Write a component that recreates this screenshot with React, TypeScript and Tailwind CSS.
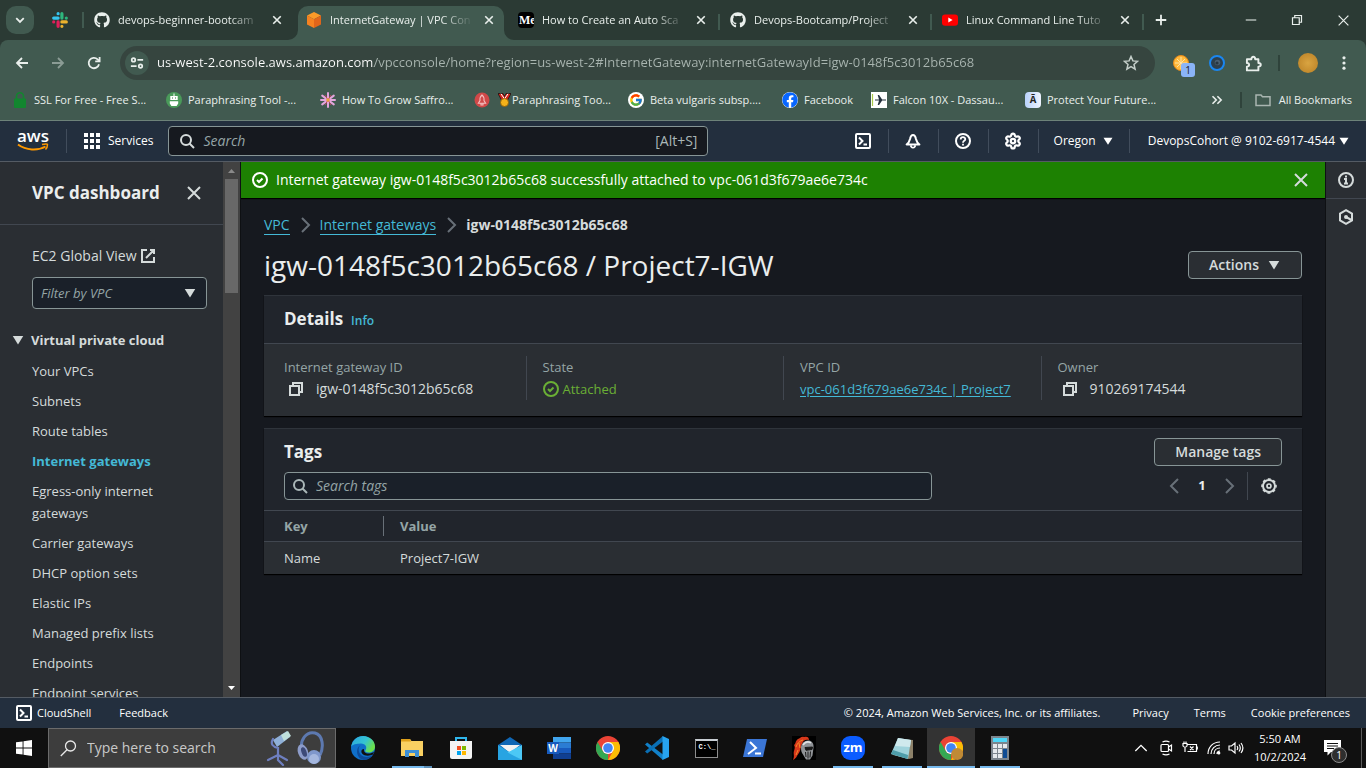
import React from "react";
import { FaGithub, FaFacebook } from "react-icons/fa";
import { FcGoogle } from "react-icons/fc";
import { Settings } from "lucide-react";

type IconProps = { className?: string; size?: number; w?: number; children?: React.ReactNode };

function Line({ className = "", size = 16, w = 2, children }: IconProps) {
  return (
    <svg
      width={size}
      height={size}
      viewBox="0 0 16 16"
      fill="none"
      stroke="currentColor"
      strokeWidth={w}
      className={`shrink-0 ${className}`}
      aria-hidden="true"
    >
      {children}
    </svg>
  );
}

const CloseIcon = ({ className, size, w }: IconProps) => (
  <Line className={className} size={size} w={w}>
    <path d="M2 2l12 12M14 2 2 14" />
  </Line>
);
const CheckCircle = ({ className }: IconProps) => (
  <Line className={className}>
    <circle cx="8" cy="8" r="7" />
    <path d="m5 8 2 2 3.5-3.5" />
  </Line>
);
const SearchIcon = ({ className }: IconProps) => (
  <Line className={className}>
    <circle cx="7" cy="7" r="5" />
    <path d="m15 15-4.5-4.5" />
  </Line>
);
const CopyIcon = ({ className }: IconProps) => (
  <Line className={className}>
    <path d="M2 5h9v9H2z" />
    <path d="M5 5V2h9v9h-3" />
  </Line>
);
const Chevron = ({ className, left }: { className?: string; left?: boolean }) => (
  <Line className={className}>
    <path d={left ? "m11 1-7 7 7 7" : "m5 1 7 7-7 7"} />
  </Line>
);
const Caret = ({ className, size = 14 }: IconProps) => (
  <svg width={size} height={size} viewBox="0 0 16 16" fill="currentColor" className={`shrink-0 ${className ?? ""}`} aria-hidden="true">
    <path d="M2 3.5h12L8 13z" />
  </svg>
);
const ShellIcon = () => (
  <Line>
    <rect x="1" y="1" width="14" height="14" rx="1" />
    <path d="m4 4.5 3.5 3.5L4 11.5M8.5 11.5H12" />
  </Line>
);
const GearSmall = () => (
  <Line>
    <circle cx="8" cy="8" r="6" />
    <circle cx="8" cy="8" r="7" strokeWidth="1.6" strokeDasharray="2.9 2.6" strokeDashoffset="1.4" />
    <circle cx="8" cy="8" r="2" strokeWidth="1.7" />
  </Line>
);

/* ---------- Browser ---------- */

const SlackLogo = () => (
  <svg width="16" height="16" viewBox="0 0 16 16" aria-hidden="true">
    <g fill="none" strokeWidth="3.2" strokeLinecap="round">
      <path d="M6.1 1.7v0M1.7 6.1h4.4" stroke="#36c5f0" />
      <path d="M9.9 1.7v4.4M14.3 6.1v0" stroke="#2eb67d" />
      <path d="M9.9 14.3v0M9.9 9.9h4.4" stroke="#ecb22e" />
      <path d="M6.1 9.9v4.4M1.7 9.9v0" stroke="#e01e5a" />
    </g>
  </svg>
);
const CubeLogo = () => (
  <svg width="16" height="16" viewBox="0 0 16 16" aria-hidden="true">
    <path d="M8 0 15 3.6 8 7.2 1 3.6z" fill="#fa9a28" />
    <path d="M1 3.6 8 7.2V16L1 12.4z" fill="#f58220" />
    <path d="M15 3.6 8 7.2V16l7-3.6z" fill="#e0651a" />
  </svg>
);
const MediumLogo = () => (
  <span className="flex size-4 items-center overflow-hidden rounded-sm bg-black pl-px font-['Liberation_Serif',serif] text-[12px] leading-4 font-bold text-white">
    Me
  </span>
);
const YoutubeLogo = () => (
  <svg width="16" height="16" viewBox="0 0 16 16" aria-hidden="true">
    <rect y="2.4" width="16" height="11.4" rx="3" fill="#f00" />
    <path d="M6.3 5.6v4.8L10.6 8z" fill="#fff" />
  </svg>
);

const tabs = [
  { title: "devops-beginner-bootcam", icon: <FaGithub size={16} />, active: false, sep: false },
  { title: "InternetGateway | VPC Con", icon: <CubeLogo />, active: true, sep: false },
  { title: "How to Create an Auto Sca", icon: <MediumLogo />, active: false, sep: true },
  { title: "Devops-Bootcamp/Project", icon: <FaGithub size={16} />, active: false, sep: true },
  { title: "Linux Command Line Tuto", icon: <YoutubeLogo />, active: false, sep: true },
];

function TabStrip() {
  return (
    <div className="flex h-10 items-center bg-[#2b3a34] text-[#e9efec]">
      <button aria-label="Search tabs" className="ml-1.5 flex size-7 items-center justify-center rounded-[10px] bg-[#415a50]">
        <Line size={12} w={2.4}>
          <path d="m3 5.5 5 5 5-5" />
        </Line>
      </button>
      <button aria-label="Slack" className="ml-[18px] flex">
        <SlackLogo />
      </button>
      <span className="ml-3.5 h-4 w-0.5 bg-[#415a50]" />
      <div className="ml-0.5 flex h-full min-w-0 items-end">
        {tabs.map((t) => (
          <div
            key={t.title}
            className={
              "relative flex h-[34px] w-[212px] items-center pb-1.5 " +
              (t.active
                ? "before:absolute before:inset-y-0 before:right-1.5 before:left-0 before:rounded-t-[10px] before:bg-[#415a50]"
                : "")
            }
          >
            {t.active && (
              <>
                <svg className="absolute bottom-0 -left-2.5" width="10" height="10" aria-hidden="true">
                  <path d="M10 0v10H0A10 10 0 0 0 10 0" fill="#415a50" />
                </svg>
                <svg className="absolute right-[-4px] bottom-0" width="10" height="10" aria-hidden="true">
                  <path d="M0 0v10h10A10 10 0 0 1 0 0" fill="#415a50" />
                </svg>
              </>
            )}
            <button className="relative flex min-w-0 flex-1 items-center gap-2 pl-2 text-[11px] leading-4">
              <span className="flex shrink-0">{t.icon}</span>
              <span className="min-w-0 flex-1 overflow-hidden text-left whitespace-nowrap [mask-image:linear-gradient(to_right,black_78%,transparent)]">
                {t.title}
              </span>
            </button>
            <button aria-label={`Close ${t.title}`} className="relative mr-[13px] ml-2 flex size-4 items-center justify-center">
              <CloseIcon size={10} w={2.6} />
            </button>
            {t.sep && <span className="absolute top-2 right-0.5 h-4 w-0.5 bg-[#415a50]" />}
          </div>
        ))}
      </div>
      <button aria-label="New tab" className="ml-[7px] flex size-4 items-center justify-center">
        <Line size={12} w={2.4}>
          <path d="M8 1v14M1 8h14" />
        </Line>
      </button>
      <div className="ml-auto flex">
        <button aria-label="Minimize" className="flex w-[46px] justify-center">
          <Line size={12} w={1.4}>
            <path d="M1 8h14" />
          </Line>
        </button>
        <button aria-label="Restore" className="flex w-[46px] justify-center">
          <Line size={12} w={1.6}>
            <path d="M2 5h9v9H2zM5 5V2h9v9h-3" />
          </Line>
        </button>
        <button aria-label="Close window" className="flex w-[46px] justify-center">
          <CloseIcon size={13} w={1.5} />
        </button>
      </div>
    </div>
  );
}

function Toolbar() {
  return (
    <div className="flex h-[46px] items-center rounded-t-[8px] bg-[#415a50] px-3.5 text-[#e9efec]">
      <button aria-label="Back" className="mr-5 flex">
        <Line w={1.8}>
          <path d="M14 8H3M8 3 3 8l5 5" />
        </Line>
      </button>
      <button aria-label="Forward" className="mr-5 flex text-[#8b9c95]">
        <Line w={1.8}>
          <path d="M2 8h11M8 3l5 5-5 5" />
        </Line>
      </button>
      <button aria-label="Reload" className="mr-[18px] flex">
        <Line w={1.8}>
          <path d="M13 9.2A5.2 5.2 0 1 1 11.6 4.3l1.8 1.7" />
          <path d="M13.6 2v4.4H9.2" />
        </Line>
      </button>
      <div className="flex h-[34px] min-w-0 flex-1 items-center rounded-full bg-[#36453f] pr-4 pl-[5px]">
        <button aria-label="Site information" className="flex size-6 items-center justify-center rounded-full bg-[#415a50]">
          <Line size={14} w={2}>
            <circle cx="4" cy="4.5" r="2" />
            <path d="M8.5 4.5H15M1 11.5h6.5" />
            <circle cx="12" cy="11.5" r="2" />
          </Line>
        </button>
        <input
          aria-label="Address"
          defaultValue="us-west-2.console.aws.amazon.com/vpcconsole/home?region=us-west-2#InternetGateway:internetGatewayId=igw-0148f5c3012b65c68"
          className="ml-2 min-w-0 flex-1 bg-[linear-gradient(to_right,#ffffff_217px,#a9b5b0_217px)] bg-clip-text text-[13px] text-transparent outline-none"
        />
        <button aria-label="Bookmark this page" className="flex text-[#c5cfca]">
          <Line w={1.5}>
            <path d="m8 1.5 1.9 4.4 4.7.4-3.6 3.1 1.1 4.7L8 11.6l-4.1 2.5L5 9.4 1.4 6.3l4.7-.4z" />
          </Line>
        </button>
      </div>
      <div className="ml-[18px] flex items-center">
        <button aria-label="Extension with 1 notice" className="relative flex">
          <svg width="16" height="16" viewBox="0 0 16 16" aria-hidden="true">
            <circle cx="8" cy="8" r="7.500" fill="#ffb93c" stroke="#e88a1a" />
            <path d="M8 2v12M2 8h12M4 4l8 8M12 4l-8 8" stroke="#ffe3a3" />
          </svg>
          <span className="absolute top-2 left-2 flex h-3.5 w-3.5 items-center justify-center rounded-[3px] bg-[#8ab4f8] text-[10px] leading-none text-[#202124]">1</span>
        </button>
        <button aria-label="Extension" className="ml-5 flex">
          <svg width="16" height="16" viewBox="0 0 16 16" aria-hidden="true">
            <circle cx="8" cy="8" r="7" fill="#2d3f4d" stroke="#1a86f0" strokeWidth="2" />
            <circle cx="8.500" cy="7.500" r="2.800" fill="#4a5f70" />
            <circle cx="8" cy="8" r="1.600" fill="#263541" />
          </svg>
        </button>
        <button aria-label="Extensions" className="ml-5 flex">
          <Line size={17} w={1.8}>
            <path d="M1.800 4H6c0-3.200 3.600-3.200 3.600 0h3v3.500c3 0 3 3.400 0 3.400v3.600H1.800v-3.600c2.800 0 2.800-3.400 0-3.400z" strokeLinejoin="round" />
          </Line>
        </button>
        <span className="ml-4 h-4 w-0.5 bg-[#2f433b]" />
        <button aria-label="Profile" className="ml-[18px] size-5 rounded-full bg-[radial-gradient(#d9a441,#b97f24)]" />
        <button aria-label="Menu" className="ml-[18px] flex">
          <svg width="16" height="16" viewBox="0 0 16 16" fill="currentColor" aria-hidden="true">
            <circle cx="8" cy="2.8" r="1.6" />
            <circle cx="8" cy="8" r="1.6" />
            <circle cx="8" cy="13.2" r="1.6" />
          </svg>
        </button>
      </div>
    </div>
  );
}

const LockMark = () => (
  <svg width="16" height="16" viewBox="0 0 16 16" aria-hidden="true">
    <rect x="2" y="6.5" width="12" height="9.5" rx="1" fill="#12862f" />
    <path d="M4.5 7V4.3a3.5 3.5 0 0 1 7 0V7" fill="none" stroke="#12862f" strokeWidth="1.6" />
  </svg>
);
const RobotMark = () => (
  <svg width="16" height="16" viewBox="0 0 16 16" aria-hidden="true">
    <circle cx="8" cy="8" r="8" fill="#4a9a5a" />
    <path d="M7.5 1.5h1V4h3.2v4H4.3V4h3.2zM3.8 9.3h8.4v2.2L10.6 14H5.4l-1.6-2.5z" fill="#fff" />
    <path d="M6 6h1M9 6h1" stroke="#2e7a40" strokeWidth="1.2" />
  </svg>
);
const FlowerMark = () => (
  <svg width="16" height="16" viewBox="0 0 16 16" aria-hidden="true">
    <path d="M8 1v14M2.2 3.6l11.6 8.8M2.2 12.4l11.6-8.8M1 8h14" stroke="#e3a5dc" strokeWidth="2" strokeLinecap="round" />
    <path d="M5 3l6 10M11 3 5 13" stroke="#b8475c" strokeWidth="1" />
    <circle cx="8" cy="8" r="1.8" fill="#e9a13b" />
  </svg>
);
const RocketMark = () => (
  <svg width="16" height="16" viewBox="0 0 16 16" aria-hidden="true">
    <circle cx="8" cy="8" r="7.5" fill="#d04848" />
    <path d="M8 3c2 1.6 2.2 3.6 2 5.6l1.6 2.6H4.4L6 8.6C5.8 6.6 6 4.600 8 3zM7 11v2h2v-2" fill="none" stroke="#f3c0c0" strokeWidth="1.1" />
  </svg>
);
const MedalMark = () => (
  <svg width="13" height="14" viewBox="0 0 13 14" aria-hidden="true">
    <path d="M0 .5h5l1.500 3 1.500-3h5L9 8H4z" fill="#d8261c" stroke="#1c1210" strokeWidth=".8" />
    <path d="M3 .8 6.500 6 10 .8" fill="none" stroke="#fff" strokeWidth="1" />
    <circle cx="6.500" cy="9.500" r="4" fill="#f5b21a" stroke="#8a5a08" strokeWidth=".8" />
  </svg>
);
const PlaneMark = () => (
  <svg width="16" height="16" viewBox="0 0 16 16" aria-hidden="true">
    <rect width="16" height="16" fill="#fff" />
    <path d="M1.500 2v12" stroke="#a9c94a" strokeWidth="1.200" />
    <path d="M4 7.400h4L6.700 3h1.400l3 4.400H15v1.200h-3.900l-3 4.400H6.700L8 8.600H4z" fill="#24303c" />
  </svg>
);
const BarMark = () => (
  <span className="flex size-4 items-center justify-center rounded-sm bg-[linear-gradient(to_right,#b9d2fb,#eef4ff)] font-['Liberation_Mono',monospace] text-[11px] leading-none font-bold text-[#222]">Ā</span>
);

function Bookmarks() {
  const link = "flex items-center gap-1.5 whitespace-nowrap";
  return (
    <nav aria-label="Bookmarks" className="flex h-[34px] items-center bg-[#415a50] pr-3.5 pb-1.5 pl-3 text-[11px] text-[#e9efec]">
      <a href="#" className={`${link} w-[154px]`}><LockMark />SSL For Free - Free S...</a>
      <a href="#" className={`${link} w-[154px]`}><RobotMark />Paraphrasing Tool -...</a>
      <a href="#" className={`${link} w-[154px]`}><FlowerMark />How To Grow Saffro...</a>
      <a href="#" className={`${link} w-[154px]`}><RocketMark /><span className="flex items-center gap-px pl-0.5"><MedalMark />Paraphrasing Too...</span></a>
      <a href="#" className={`${link} w-[154px]`}><FcGoogle size={16} className="rounded-full bg-white p-px" />Beta vulgaris subsp....</a>
      <a href="#" className={`${link} w-[89px]`}><FaFacebook size={16} className="rounded-full bg-white text-[#0866ff]" />Facebook</a>
      <a href="#" className={`${link} w-[154px]`}><PlaneMark />Falcon 10X - Dassau...</a>
      <a href="#" className={link}><BarMark />Protect Your Future...</a>
      <button aria-label="More bookmarks" className="mr-[17px] ml-auto flex">
        <Line size={12} w={2.2}>
          <path d="m2 3 5 5-5 5M8.500 3l5 5-5 5" />
        </Line>
      </button>
      <span className="mr-[13px] h-4 w-0.5 bg-[#2f433b]" />
      <a href="#" className="flex items-center gap-2 whitespace-nowrap">
        <Line w={1.500} className="text-[#a9b5b0]">
          <path d="M1 3h5l1.500 1.800H15v8.700H1z" />
        </Line>
        All Bookmarks
      </a>
    </nav>
  );
}

/* ---------- AWS console ---------- */

function TopNav() {
  const cell = "flex h-6 w-[50px] items-center justify-center border-r border-[#414d5c]";
  return (
    <header className="flex h-[42px] items-center border-t border-b border-t-[#6d8279] border-b-[#545b64] bg-[#232f3e] text-xs text-white">
      <a href="#" aria-label="AWS home" className="flex h-6 w-[67px] flex-col items-center border-r border-[#414d5c]">
        <span className="h-3.5 text-[17px] leading-[13px] font-semibold">aws</span>
        <svg width="32" height="9" viewBox="0 0 32 9" fill="none" stroke="#f90" aria-hidden="true">
          <path d="M1 1.500C9 7.500 21 8 28.500 3.500" strokeWidth="2" />
          <path d="M25 1.500c3-.8 5.500-.8 5.500 0S30 5 28.500 6.500" strokeWidth="1.500" />
        </svg>
      </a>
      <button className="ml-[17px] flex items-center gap-2">
        <svg width="16" height="16" viewBox="0 0 16 16" fill="currentColor" aria-hidden="true">
          {[0, 6, 12].map((y) => [0, 6, 12].map((x) => <rect key={`${x}-${y}`} x={x} y={y} width="4" height="4" />))}
        </svg>
        Services
      </button>
      <label className="ml-[15px] flex h-[30px] w-[540px] items-center rounded-sm border border-[#879596] bg-[#16191f] px-2.5 text-[#d5dbdb]">
        <SearchIcon />
        <input aria-label="Search services" placeholder="Search" className="ml-2 min-w-0 flex-1 bg-transparent text-sm outline-none placeholder:text-[#95a5a6] placeholder:italic" />
        <span className="text-sm text-[#aab7b8]">[Alt+S]</span>
      </label>
      <div className="ml-auto flex items-center">
        <button aria-label="CloudShell" className={cell}><ShellIcon /></button>
        <button aria-label="Notifications" className={cell}>
          <Line>
            <path d="M1.600 11.500h12.800C11.800 9.500 11.500 8 11 6c-.5-2.500-1.500-4-3-4S5.500 3.500 5 6c-.5 2-.8 3.500-3.400 5.500z" strokeLinejoin="round" />
            <path d="M6 12.200v1.300q2 2.400 4 0v-1.300" strokeWidth="1.800" />
          </Line>
        </button>
        <button aria-label="Help" className={cell}>
          <Line>
            <circle cx="8" cy="8" r="7" />
            <path d="M5.700 6.500c0-3 4.600-3 4.600-.2 0 1.600-2.300 1.500-2.300 3.400M8 10.800v1.600" strokeWidth="1.800" />
          </Line>
        </button>
        <button aria-label="Settings" className={cell}><Settings size={18} strokeWidth={3} /></button>
        <button className="flex h-6 items-center gap-1.5 border-r border-[#414d5c] px-[15px]">Oregon<Caret size={12} /></button>
        <button className="flex h-6 items-center gap-[3px] pr-4 pl-[18px] whitespace-nowrap">DevopsCohort @ 9102-6917-4544<Caret size={12} /></button>
      </div>
    </header>
  );
}

const navItems = [
  "Your VPCs", "Subnets", "Route tables", "Internet gateways", "Egress-only internet gateways",
  "Carrier gateways", "DHCP option sets", "Elastic IPs", "Managed prefix lists", "Endpoints", "Endpoint services",
];

function Sidebar() {
  return (
    <aside className="flex w-60 shrink-0 overflow-hidden bg-[#2a2e33] text-[#d5dbdb]">
      <div className="min-w-0 flex-1 overflow-hidden text-[13px] leading-[22px]">
        <div className="flex h-[63px] items-center justify-between border-b border-[#414750] pr-[21px] pl-8">
          <h2 className="text-[17px] font-bold text-[#eaeded]">VPC dashboard</h2>
          <button aria-label="Close navigation" className="flex"><CloseIcon /></button>
        </div>
        <div className="pt-5 pr-4 pl-8">
          <a href="#" className="flex items-center gap-1 text-sm leading-[22px]">
            EC2 Global View
            <Line>
              <path d="M10 2h4v4M6 10l8-8M14 9v5H2V2h5" />
            </Line>
          </a>
          <div className="relative mt-2.5">
            <select aria-label="Filter by VPC" className="block h-8 w-full appearance-none rounded-sm border border-[#879596] bg-[#1a2029] px-2 text-[13px] text-[#95a5a6] italic">
              <option>Filter by VPC</option>
            </select>
            <Caret size={14} className="pointer-events-none absolute top-[9px] right-2.5" />
          </div>
        </div>
        <h3 className="mt-5 flex items-center gap-1.5 pl-[11px] font-bold">
          <Caret size={14} />
          Virtual private cloud
        </h3>
        <ul className="mt-[5px] pr-10 pl-8">
          {navItems.map((n) => (
            <li key={n} className="py-1">
              <a href="#" className={n === "Internet gateways" ? "font-bold text-[#44b9d6]" : ""}>{n}</a>
            </li>
          ))}
        </ul>
      </div>
      <div aria-hidden="true" className="flex w-[17px] shrink-0 flex-col items-center bg-[#424242]">
        <svg width="17" height="17" viewBox="0 0 17 17"><path d="M5 11h7L8.500 7z" fill="#8a8a8a" /></svg>
        <div className="h-[114px] w-[13px] bg-[#686868]" />
        <svg className="mt-auto" width="17" height="17" viewBox="0 0 17 17"><path d="M5 6h7L8.500 10z" fill="#fff" /></svg>
      </div>
    </aside>
  );
}

function Details() {
  const col = "h-11 border-l border-[#414750] pl-4 first:border-transparent first:pl-[15px]";
  return (
    <section className="mt-3 border-t border-[#2f343b] bg-[#2a2e33] shadow-[0_1px_1px_#000]">
      <div className="flex h-12 items-center gap-2 border-b border-[#414750] bg-[#21252c] px-5 pb-0.5">
        <h2 className="text-[17px] font-bold text-[#eaeded]">Details</h2>
        <a href="#" className="pt-1 text-xs font-semibold text-[#44b9d6]">Info</a>
      </div>
      <div className="grid grid-cols-4 px-1 pt-3 pb-4 text-[13px] leading-[22px] text-[#95a5a6]">
        <div className={col}>
          <div>Internet gateway ID</div>
          <div className="flex items-center text-sm leading-[22px] text-[#d5dbdb]">
            <button aria-label="Copy gateway ID" className="mr-3 ml-1 flex"><CopyIcon /></button>igw-0148f5c3012b65c68
          </div>
        </div>
        <div className={col}>
          <div>State</div>
          <div className="flex items-center gap-1 text-[#6aaf35]"><CheckCircle />Attached</div>
        </div>
        <div className={col}>
          <div>VPC ID</div>
          <a href="#" className="whitespace-nowrap text-[#44b9d6] underline underline-offset-2">vpc-061d3f679ae6e734c | Project7</a>
        </div>
        <div className={col}>
          <div>Owner</div>
          <div className="flex items-center text-sm leading-[22px] text-[#d5dbdb]">
            <button aria-label="Copy owner" className="mr-3 ml-1 flex"><CopyIcon /></button>910269174544
          </div>
        </div>
      </div>
    </section>
  );
}

const outlineBtn = "flex h-7 items-center rounded-sm border border-[#879596] bg-[#2a2e33] px-5 text-sm font-semibold text-[#d5dbdb]";

function Tags() {
  return (
    <section className="mt-3 border-t border-[#2f343b] bg-[#2a2e33] shadow-[0_1px_1px_#000]">
      <div className="bg-[#21252c] px-5 pt-[9px] pb-2.5">
        <div className="flex items-center justify-between">
          <h2 className="text-[17px] leading-7 font-bold text-[#eaeded]">Tags</h2>
          <button className={outlineBtn}>Manage tags</button>
        </div>
        <div className="mt-1.5 flex items-center">
          <label className="flex h-7 w-[648px] items-center rounded-sm border border-[#879596] bg-[#1a2029] px-[7px] text-[#aab7b8]">
            <SearchIcon />
            <input aria-label="Search tags" placeholder="Search tags" className="ml-2 min-w-0 flex-1 bg-transparent text-sm outline-none placeholder:text-[#95a5a6] placeholder:italic" />
          </label>
          <div className="ml-auto flex items-center text-[13px] text-[#687078]">
            <button aria-label="Previous page" className="flex"><Chevron left /></button>
            <button className="w-[38px] text-center font-bold text-[#eaeded]">1</button>
            <button aria-label="Next page" className="flex"><Chevron /></button>
            <span className="ml-2.5 h-7 w-px bg-[#414750]" />
            <button aria-label="Table preferences" className="mr-[5px] ml-[13px] flex text-[#d5dbdb]"><GearSmall /></button>
          </div>
        </div>
      </div>
      <table className="w-full border-collapse text-left text-[13px] leading-5">
        <thead>
          <tr className="border-y border-[#414750] bg-[#21252c] text-[#95a5a6]">
            <th className="h-[31px] w-[120px] p-0 align-middle">
              <span className="block h-5 border-r border-[#687078] pl-5">Key</span>
            </th>
            <th className="p-0 pl-4 align-middle">Value</th>
          </tr>
        </thead>
        <tbody>
          <tr className="h-8 text-[#d5dbdb]">
            <td className="pl-5">Name</td>
            <td className="pl-4">Project7-IGW</td>
          </tr>
        </tbody>
      </table>
    </section>
  );
}

function Main() {
  return (
    <main className="ml-px min-w-0 flex-1 overflow-hidden bg-[#16191f] text-[#d5dbdb]">
      <div role="status" className="flex h-9 items-center bg-[#1d8102] pr-4 pl-[11px] text-sm text-white shadow-[0_1px_1px_#000]">
        <CheckCircle />
        <span className="ml-2 flex-1">Internet gateway igw-0148f5c3012b65c68 successfully attached to vpc-061d3f679ae6e734c</span>
        <button aria-label="Dismiss" className="flex text-[#d5dbdb]"><CloseIcon /></button>
      </div>
      <div className="px-[23px]">
        <nav aria-label="Breadcrumb" className="mt-[17px] flex h-5 items-center text-sm leading-[18px]">
          <a href="#" className="border-b border-[#44b9d6] leading-[18px] text-[#44b9d6]">VPC</a>
          <Chevron className="mx-[7px] text-[#687078]" />
          <a href="#" className="border-b border-[#44b9d6] leading-[18px] text-[#44b9d6]">Internet gateways</a>
          <Chevron className="mx-[7px] text-[#687078]" />
          <span className="font-bold">igw-0148f5c3012b65c68</span>
        </nav>
        <div className="mt-3 flex h-9 items-center justify-between">
          <h1 className="text-[28px] leading-9 text-[#eaeded]">igw-0148f5c3012b65c68 / Project7-IGW</h1>
          <button className={outlineBtn}>Actions<Caret size={14} className="ml-2" /></button>
        </div>
        <Details />
        <Tags />
      </div>
    </main>
  );
}

function ToolRail() {
  return (
    <aside className="ml-px flex w-10 shrink-0 flex-col bg-[#2a2e33] text-[#d5dbdb]">
      <button aria-label="Info panel" className="flex h-[37px] items-center justify-center border-b border-[#414750]">
        <Line>
          <circle cx="8" cy="8" r="7" />
          <path d="M6 7h2v4M6 11.500h4M7 4.500h2" />
        </Line>
      </button>
      <button aria-label="Assistant panel" className="flex h-9 items-center justify-center">
        <Line>
          <path d="M8 1.200 14 4.600v6.800L8 14.800 2 11.400V4.600z" />
          <path d="m8 8 5.500 3" />
          <circle cx="8" cy="8" r="1" />
        </Line>
      </button>
    </aside>
  );
}

function Footer() {
  return (
    <footer className="flex h-[31px] shrink-0 items-center border-t border-[#545b64] bg-[#232f3e] px-4 text-[11px] whitespace-nowrap text-white">
      <button className="flex items-center gap-[5px]"><ShellIcon />CloudShell</button>
      <button className="ml-7">Feedback</button>
      <span className="ml-auto">© 2024, Amazon Web Services, Inc. or its affiliates.</span>
      <a href="#" className="ml-8">Privacy</a>
      <a href="#" className="ml-[25px]">Terms</a>
      <a href="#" className="ml-[25px]">Cookie preferences</a>
    </footer>
  );
}

/* ---------- Windows taskbar ---------- */

const ChromeLogo = ({ badge }: { badge?: boolean }) => (
  <svg width="24" height="24" viewBox="0 0 24 24" aria-hidden="true">
    <circle cx="12" cy="12" r="12" fill="#ea4335" />
    <path d="M1.600 6 6.800 15a6 6 0 0 0 5.200 3L12 24A12 12 0 0 1 1.600 6" fill="#34a853" />
    <path d="M12 6h10.400A12 12 0 0 1 12 24l5.200-9z" fill="#fbbc05" />
    <circle cx="12" cy="12" r="6" fill="#fff" />
    <circle cx="12" cy="12" r="4.800" fill="#4285f4" />
    {badge && <circle cx="18.200" cy="18" r="6" fill="#c08a35" />}
  </svg>
);

const apps: { name: string; bar?: string; active?: boolean; icon: React.ReactNode }[] = [
  {
    name: "Edge",
    icon: (
      <svg width="24" height="24" viewBox="0 0 24 24" aria-hidden="true">
        <defs>
          <linearGradient id="edge-top" x1="0" x2="1" y1="0" y2=".5">
            <stop offset="0" stopColor="#2aa5e0" />
            <stop offset=".6" stopColor="#35c4d2" />
            <stop offset="1" stopColor="#6be04a" />
          </linearGradient>
        </defs>
        <circle cx="12" cy="12" r="12" fill="#0f6fc9" />
        <path d="M.2 10.500C1.500 4 6.500 0 12 0c7 0 12 5.200 12 10.500 0 4-3 6-6.500 6-3 0-4-1.300-3-2.500 2-2.600 0-6.500-4.500-6.500-5 0-8.500 1-9.800 3z" fill="url(#edge-top)" />
        <path d="M9.500 9C7 11 7 16 10 19c3 2.600 8 2.600 12 0a12 12 0 0 1-9 5C5 23 4 12 9.500 9z" fill="#0c4a9a" />
        <path d="M13 13c-.5 2.500 1 4.500 4.500 4.500 2 0 4-.7 5.500-1.500l-1 2.500c-4 2-10 1.500-11.500-2-.5-2 .5-3.500 2.500-3.500z" fill="#101010" />
      </svg>
    ),
  },
  {
    name: "File Explorer",
    bar: "split",
    icon: (
      <svg width="22" height="19" viewBox="0 0 22 19" aria-hidden="true">
        <path d="M0 0h9l1.500 2H22v15H0z" fill="#f9d062" />
        <path d="M0 0h9l1 2.500H0z" fill="#dfa01a" />
        <path d="M4 18V11h14v7h-4v-4H8v4z" fill="#3d8fd6" />
      </svg>
    ),
  },
  {
    name: "Microsoft Store",
    icon: (
      <svg width="24" height="24" viewBox="0 0 24 24" aria-hidden="true">
        <path d="M7 6V2h10v4" fill="none" stroke="#2fb6ec" strokeWidth="2" />
        <path d="M1 5h22v16q0 2-2 2H3q-2 0-2-2z" fill="#f4f4f4" />
        <path d="M8 10h4v4H8z" fill="#f25022" />
        <path d="M13 10h4v4h-4z" fill="#7fba00" />
        <path d="M8 15h4v4H8z" fill="#00a4ef" />
        <path d="M13 15h4v4h-4z" fill="#ffb900" />
      </svg>
    ),
  },
  {
    name: "Mail",
    icon: (
      <svg width="24" height="23" viewBox="0 0 24 23" aria-hidden="true">
        <path d="M0 8 12 0l12 8v15H0z" fill="#1067b5" />
        <path d="M2 8h20l-10 8z" fill="#f2f2f2" />
        <path d="M0 8v15h24z" fill="#28a4e2" />
        <path d="M24 8v15L9.500 15.500z" fill="#4cc8f5" />
      </svg>
    ),
  },
  {
    name: "Word",
    icon: (
      <span className="relative flex">
        <svg width="24" height="22" viewBox="0 0 24 22" aria-hidden="true">
          <path d="M6 0h18v5.500H6z" fill="#41a5ee" />
          <path d="M6 5.500h18V11H6z" fill="#2b7cd3" />
          <path d="M6 11h18v5.500H6z" fill="#185abd" />
          <path d="M6 16.500h18V22H6z" fill="#103f91" />
          <path d="M0 5h12v12H0z" fill="#185abd" />
        </svg>
        <span className="absolute top-[5px] left-0 w-3 text-center text-[10px] leading-3 font-bold text-white">W</span>
      </span>
    ),
  },
  { name: "Chrome", icon: <ChromeLogo /> },
  {
    name: "Visual Studio Code",
    icon: (
      <svg width="24" height="24" viewBox="0 0 24 24" aria-hidden="true">
        <path d="m0 8.500 2.200-2L18 18.500V24z" fill="#1180c8" />
        <path d="m0 15.500 2.200 2L18 5.500V0z" fill="#0a6fb4" />
        <path d="M17.500 0 24 3v18l-6.500 3z" fill="#27a3ee" />
      </svg>
    ),
  },
  {
    name: "Command Prompt",
    icon: (
      <span className="flex h-[19px] w-[23px] flex-col border border-t-2 border-[#8d8d8d] border-t-[#c9ced3] bg-black pt-0.5 pl-0.5 font-['Liberation_Mono',monospace] text-[7px] leading-[8px] font-bold text-white">
        C:\_
      </span>
    ),
  },
  {
    name: "PowerShell",
    icon: (
      <svg width="24" height="18" viewBox="0 0 24 18" aria-hidden="true">
        <path d="M4 0h20l-4 18H0z" fill="#3b76d6" />
        <path d="m7 3 6 6-8 6M12 14.500h6" fill="none" stroke="#fff" strokeWidth="2" />
      </svg>
    ),
  },
  {
    name: "Knight",
    icon: (
      <svg width="24" height="24" viewBox="0 0 24 24" aria-hidden="true">
        <rect width="24" height="24" fill="#000" />
        <path d="M1 24c2-4 0-6 1-9s1-4 0-6c2-1 1-4 4-6 2 0 3-3 6-2 3-1 5 0 5 3-3-1-6 0-7 4-2 3-1 6-3 9-2 2-2 5-6 7z" fill="#d8381a" />
        <path d="M4 11c1-3 3-6 7-7M4 19l2-5M7 7l1 5" stroke="#f48a2a" fill="none" />
        <path d="M9 12c0-5 4-8 8-7.500 3 .5 5 3 4.500 7l-1 8-2.500 4h-4l-3-5c-1.500-2-2-4-2-6.500z" fill="#8f9296" />
        <path d="M11 9c2-3 5-4 8-2" stroke="#dfe2e5" fill="none" strokeWidth="1.500" />
        <path d="m13 11.500 7.500-.5-.5 2.500-6 .8zM16 15.500v7M18.500 15.500l-.5 6M13.500 16l.5 5" stroke="#1a1a1a" fill="#1a1a1a" />
      </svg>
    ),
  },
  {
    name: "Zoom",
    bar: "full",
    icon: <span className="flex size-6 items-center justify-center rounded-[9px] bg-[#0b5cff] pb-0.5 text-[13px] leading-none font-bold text-white">zm</span>,
  },
  {
    name: "Notepad",
    bar: "full",
    icon: (
      <svg width="23" height="23" viewBox="0 0 23 23" aria-hidden="true">
        <path d="m8 2 14 1v18l-4 1L2 18z" fill="#8c8169" />
        <path d="m7 1 13 2-3 19L0 17z" fill="#9fd3dc" />
        <path d="m7 1 13 2-1 7L4 9z" fill="#cfe9ed" />
        <path d="m2 13 15 5-.5 4L0 17z" fill="#4f9eab" />
      </svg>
    ),
  },
  { name: "Chrome profile", bar: "active", active: true, icon: <ChromeLogo badge /> },
  {
    name: "Calculator",
    bar: "full",
    icon: (
      <svg width="18" height="24" viewBox="0 0 18 24" aria-hidden="true">
        <rect width="18" height="24" fill="#7c858d" />
        <path d="M2 2h14v4H2z" fill="#4fd6f7" />
        <path d="M2 8h4v4H2zM7 8h4v4H7zM12 8h4v4h-4zM2 13h4v4H2zM7 13h4v4H7zM2 18h4v4H2zM7 18h4v4H7z" fill="#e6e9ec" />
        <path d="M12 13h4v9h-4z" fill="#0f4c94" />
      </svg>
    ),
  },
];

function Taskbar() {
  return (
    <div className="flex h-10 shrink-0 items-center bg-[#101010] text-white">
      <button aria-label="Start" className="flex h-full w-12 items-center justify-center">
        <svg width="16" height="16" viewBox="0 0 16 16" fill="#fff" aria-hidden="true">
          <path d="M0 2.300 6.600 1.400v6.100H0zM7.500 1.200 16 0v7.500H7.500zM0 8.400h6.600v6.200L0 13.700zM7.500 8.400H16V16l-8.500-1.200z" />
        </svg>
      </button>
      <label className="flex h-full w-72 shrink-0 items-center border border-[#6b6b6b] bg-[#3d3d3d] pr-2 pl-[11px]">
        <svg width="17" height="17" viewBox="0 0 17 17" fill="none" stroke="#e8e8e8" strokeWidth="1.300" aria-hidden="true">
          <circle cx="10.500" cy="6" r="5" />
          <path d="M7 9.700.8 16" />
        </svg>
        <input aria-label="Search Windows" placeholder="Type here to search" className="ml-2.5 min-w-0 flex-1 bg-transparent text-sm outline-none placeholder:text-[#c9c9c9]" />
        <svg width="62" height="36" viewBox="0 0 62 36" aria-hidden="true">
          <path d="M8 10 22 1l3 6-13 10z" fill="#8fb0d8" />
          <path d="m16 5 7-4 3 5-7 5z" fill="#bfe0dc" />
          <path d="M8 9c-3 5 0 8 5 9v8M13 25 3 30M13 25l9 5M13 25v5l5 5" fill="none" stroke="#6e7fc0" strokeWidth="2.200" strokeLinecap="round" />
          <path d="M37 22C34 9 42 1 50 3c8 2 9 14 5 22" fill="none" stroke="#5d79b0" strokeWidth="3" />
          <ellipse cx="38" cy="22" rx="5" ry="8" fill="#8d9cc9" transform="rotate(-20 38 22)" />
          <ellipse cx="39" cy="22" rx="2.500" ry="5" fill="#3d4a78" transform="rotate(-20 39 22)" />
          <ellipse cx="49" cy="27" rx="7" ry="7" fill="#7f97cb" />
          <ellipse cx="49" cy="29" rx="5" ry="5" fill="#a5b7de" />
        </svg>
      </label>
      <div className="ml-[3px] flex h-full gap-px">
        {apps.map((a) => (
          <button key={a.name} aria-label={a.name} className={"relative flex h-full w-12 items-center justify-center " + (a.active ? "bg-[#333]" : "")}>
            {a.icon}
            {a.bar === "full" && <span className="absolute inset-x-1 bottom-0 h-0.5 bg-[#76b9ed]" />}
            {a.bar === "active" && <span className="absolute inset-x-0 bottom-0 h-0.5 bg-[#76b9ed]" />}
            {a.bar === "split" && (
              <>
                <span className="absolute bottom-0 left-1 h-0.5 w-8 bg-[#76b9ed]" />
                <span className="absolute right-1 bottom-0 h-0.5 w-2 bg-[#5c8fb8]" />
              </>
            )}
          </button>
        ))}
      </div>
      <div className="ml-auto flex h-full items-center">
        <button aria-label="Hidden icons" className="flex">
          <Line size={14} w={1.500}><path d="M1.500 11.500 8 5l6.500 6.500" /></Line>
        </button>
        <button aria-label="Meet now" className="ml-2.5 flex">
          <Line w={1.200}>
            <rect x="3" y="4.500" width="7.500" height="7" rx="1" />
            <path d="m10.500 7 3-2v6l-3-2M4.500 2Q8 .2 11.500 2M4.500 14q3.500 1.800 7 0" />
          </Line>
        </button>
        <button aria-label="Battery" className="ml-2 flex">
          <Line w={1.200}>
            <path d="M5.500 4.500h9v7h-9M15.300 6.500v3M8 6.500l3.500 3.500M11.500 6.500 8 10M1 3.500h4v2.500q-2 2.500-4 0zM3 7.500V12M2 1.500v2M4 1.500v2" />
          </Line>
        </button>
        <button aria-label="Network" className="ml-2 flex">
          <Line w={1.200}>
            <path d="M2 14C2 7 7 2 14 2M5 14c0-5 4-9 9-9M8 14c0-3.500 2.500-6 6-6M11 14c0-2 1-3 3-3" />
            <circle cx="12.800" cy="13" r="1" fill="currentColor" />
          </Line>
        </button>
        <button aria-label="Volume" className="ml-1.5 flex">
          <Line w={1.200}>
            <path d="M1 6h2.500L7 3v10L3.500 10H1zM9 6q1.500 2 0 4M11 4.500q2.600 3.500 0 7M13 3q3.800 5 0 10" />
          </Line>
        </button>
        <button className="flex w-[72px] flex-col items-center text-[11px] leading-[18px]">
          <span>5:50 AM</span>
          <span>10/2/2024</span>
        </button>
        <button aria-label="Notifications, 1 new" className="relative ml-2 flex">
          <svg width="17" height="16" viewBox="0 0 17 16" aria-hidden="true">
            <path d="M0 0h17v12H7l-3.500 3.500V12H0z" fill="#fff" />
            <path d="M3 3.500h11M3 6h11M3 8.500h7" stroke="#101010" />
          </svg>
          <span className="absolute top-[7px] left-[7px] flex size-4 items-center justify-center rounded-full border border-[#8a8a8a] bg-[#2e2e2e] text-[10px] leading-none">1</span>
        </button>
        <span className="ml-5 h-full w-px bg-[#5a5a5a]" />
        <span className="w-1" />
      </div>
    </div>
  );
}

export default function App() {
  return (
    <div className="flex h-screen flex-col overflow-hidden bg-[#0e1013] font-['Open_Sans','Noto_Sans',sans-serif]">
      <div className="shrink-0 bg-[#2b3a34]">
        <TabStrip />
        <Toolbar />
        <Bookmarks />
      </div>
      <TopNav />
      <div className="flex min-h-0 flex-1">
        <Sidebar />
        <Main />
        <ToolRail />
      </div>
      <Footer />
      <Taskbar />
    </div>
  );
}
